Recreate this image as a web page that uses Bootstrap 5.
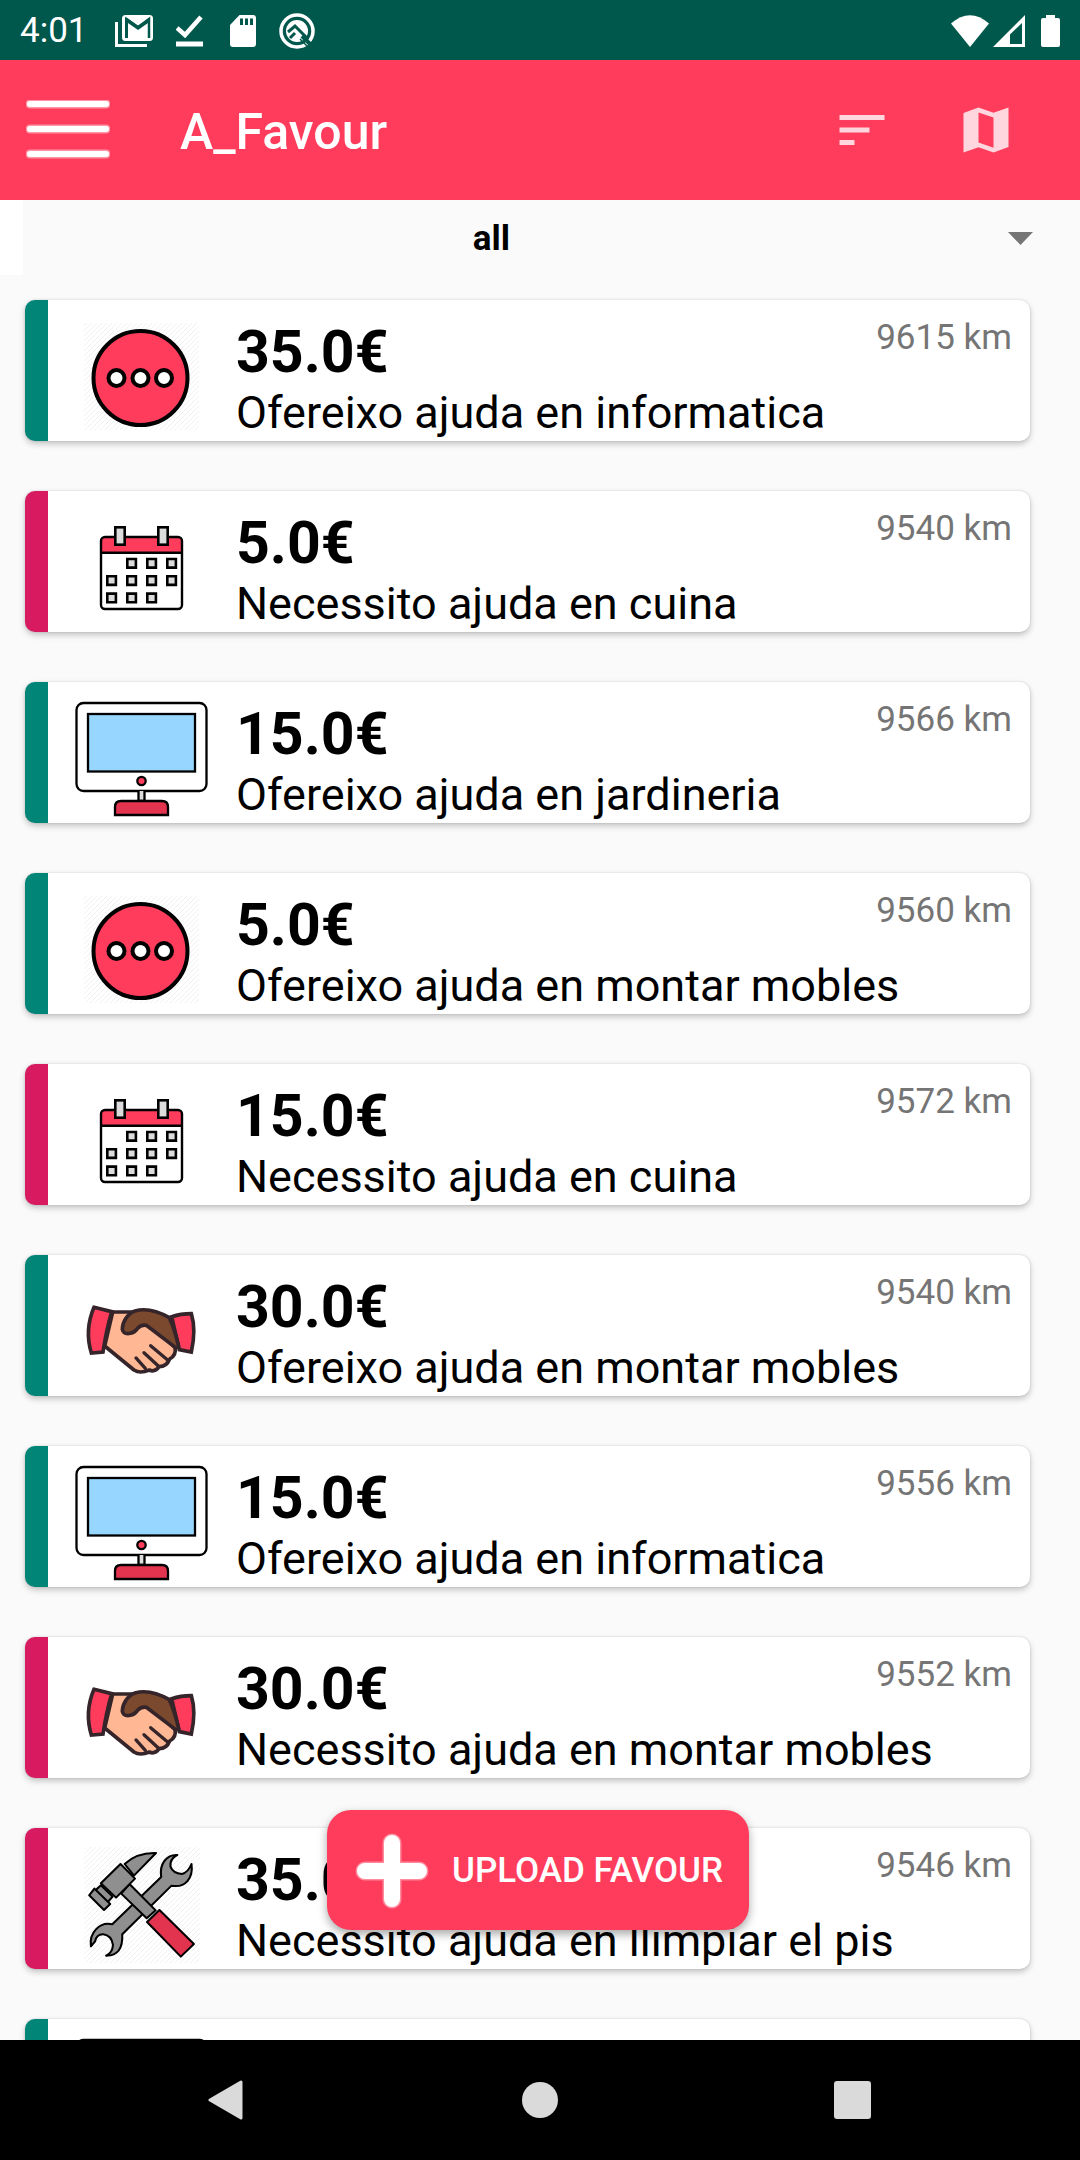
<!DOCTYPE html>
<html lang="ca">
<head>
<meta charset="utf-8">
<meta name="viewport" content="width=device-width, initial-scale=1">
<title>A_Favour</title>
<link href="https://cdn.jsdelivr.net/npm/bootstrap@5.3.0/dist/css/bootstrap.min.css" rel="stylesheet">
<style>
  :root { --brand: #ff3c5c; --offer: #008577; --need: #d81b60; }
  body { font-family: Roboto, "Noto Sans", sans-serif; background: #fafafa; color: #000; }
  svg { display: block; flex: none; }
  .status-strip { height: 60px; background: #00574b; color: #fff; font-size: 35px; line-height: 44px; padding: 2px 20px 0; }
  .status-icons { gap: 23px; padding-left: 27px; }
  .app-bar { height: 140px; background: var(--brand); color: #fff; padding: 0 64px 0 26px; }
  .app-title { font-size: 50px; line-height: 60px; font-weight: 500; margin: 4px 0 0 70px; }
  .app-actions { gap: 64px; color: #ffd6dd; }
  .plain-btn { background: none; border: 0; padding: 0; color: inherit; }
  .filter-bar { height: 75px; padding-right: 24px; }
  .filter-edge { width: 23px; background: #fff; }
  .filter-select { appearance: none; border: 0; border-radius: 0; background: none; width: 100%;
    font-size: 35px; font-weight: 700; line-height: 44px; color: #000; text-align: center; text-align-last: center; padding: 2px 96px 0 0; }
  .filter-arrow { right: 23px; top: 32px; pointer-events: none; }
  .favour-list { gap: 50px; padding: 25px 50px 0 25px; }
  .favour { height: 141px; background: #fff; border-radius: 10px; border-left: 23px solid var(--offer);
    box-shadow: 0 3px 6px rgba(0,0,0,.22), 0 0 2px rgba(0,0,0,.16); color: #000; text-decoration: none; }
  .favour-need { border-left-color: var(--need); }
  .favour-text { padding: 16px 18px 0 2px; }
  .price { font-size: 59px; line-height: 72px; font-weight: 700; }
  .descr { font-size: 45px; line-height: 49px; }
  .dist { font-size: 35px; line-height: 44px; color: #757575; }
  .fab { left: 327px; right: 331px; bottom: 110px; height: 120px; border: 0; border-radius: 24px; background: var(--brand); color: #fff;
    font-size: 35px; line-height: 44px; font-weight: 500; gap: 23px; padding: 2px 0 0 28px; box-shadow: 0 4px 10px rgba(0,0,0,.35); }
  .nav-strip { height: 120px; background: #000; color: #dadada; gap: 274px; }
</style>
</head>
<body class="vh-100 d-flex flex-column overflow-hidden">

<svg width="0" height="0" class="position-absolute" aria-hidden="true">
  <defs>
    <pattern id="hatch" width="5" height="5" patternUnits="userSpaceOnUse"><path d="M-1 1l2-2M0 5l5-5M4 6l2-2" stroke="#f1f1f1" stroke-width="1"/></pattern>
    <symbol id="i-more" viewBox="48 0 186 141">
      <rect x="84" y="23" width="115" height="107" fill="url(#hatch)"/>
      <circle cx="140.500" cy="78" r="47" fill="#ff3c5c" stroke="#000" stroke-width="4"/>
      <g fill="#fff" stroke="#000" stroke-width="4"><circle cx="116.500" cy="78" r="8"/><circle cx="140.500" cy="78" r="8"/><circle cx="164" cy="78" r="8"/></g>
    </symbol>
    <symbol id="i-calendar" viewBox="48 0 186 141">
      <rect x="101" y="46" width="81" height="72" rx="4" fill="#fff"/>
      <path d="M101 62V50q0-4 4-4h73q4 0 4 4v12z" fill="#ff3c5c"/>
      <rect x="101" y="46" width="81" height="72" rx="4" fill="none" stroke="#000" stroke-width="2.400"/>
      <path d="M101 61.800h81" stroke="#000" stroke-width="2.600"/>
      <g fill="#dcdcdc" stroke="#000" stroke-width="2.600">
        <rect x="115.300" y="36.300" width="9.400" height="17.400"/><rect x="158.300" y="36.300" width="9.400" height="17.400"/>
        <path d="M127.300 68h8.600v8.600h-8.600zM147.300 68h8.600v8.600h-8.600zM167.300 68h8.600v8.600h-8.600zM107.300 85.300h8.600v8.600h-8.600zM127.300 85.300h8.600v8.600h-8.600zM147.300 85.300h8.600v8.600h-8.600zM167.300 85.300h8.600v8.600h-8.600zM107.300 102.600h8.600v8.600h-8.600zM127.300 102.600h8.600v8.600h-8.600zM147.300 102.600h8.600v8.600h-8.600z"/>
      </g>
    </symbol>
    <symbol id="i-computer" viewBox="48 0 186 141">
      <g stroke="#000" stroke-width="2.300">
        <rect x="76.500" y="21" width="130" height="88" rx="7" fill="#fff"/>
        <rect x="88" y="32" width="107" height="57.500" fill="#97d7ff"/>
        <circle cx="141.500" cy="99" r="4.200" fill="#ff3c5c"/>
        <path d="M138.500 109v10h6v-10" fill="#ddd"/>
        <path d="M115 133v-8q0-6 6-6h41q6 0 6 6v8z" fill="#e2334f"/>
      </g>
    </symbol>
    <symbol id="i-hands" viewBox="48 0 186 141">
      <g transform="translate(60 -5) scale(.3333)" stroke="#35252a" stroke-width="11" stroke-linejoin="round" stroke-linecap="round">
        <path d="M158 186H222L262 216 345 292Q350 315 329 327 320 350 298 350 284 368 268 360 240 372 222 360L134 288z" fill="#ffb893"/>
        <path d="M102 172L155 185Q139 240 129 306L94 309Q73 240 102 172z" fill="#ff3c5c" stroke-linejoin="miter"/>
        <path d="M335 200Q362 191 394 191 409 240 394 306L358 299z" fill="#ff3c5c" stroke-linejoin="miter"/>
        <path d="M328 203Q270 170 225 183C203 190 187 216 187 238 192 258 221 252 232 236Q243 223 259 226L347 293 356 290Q345 240 328 203z" fill="#7b4a2e"/>
        <path d="M228 324l28 31M252 308l43 40M272 287l50 42" fill="none" stroke-width="10"/>
      </g>
    </symbol>
    <symbol id="i-tools" viewBox="48 0 186 141">
      <rect x="84" y="19" width="116" height="116" fill="url(#hatch)"/>
      <g transform="translate(0 -48) scale(.3444 .3333)" fill="#8f8f8f" stroke="#000" stroke-width="6" stroke-linejoin="round">
        <path d="M515 225C485 223 462 250 468 291L326 433C290 424 258 458 264 499L276 484Q281 462 300 463 324 466 328 495 327 518 308 527 358 528 355 463L498 317C538 325 562 294 556 252Q546 278 528 282 502 280 495 260 492 238 515 225z"/>
        <path d="M376 312L452 391 426 415 352 341z"/>
        <path d="M362 252Q398 217 453 219L389 287z"/>
        <path d="M350 252L392 296 337 353 293 310z"/>
        <path d="M293 316l34 34-14 16-36-35z"/>
        <path d="M274 326L320 372 302 390 259 346z"/>
        <path d="M463 390L563 492 525 530 427 426z" fill="#e2334f"/>
      </g>
    </symbol>
  </defs>
</svg>

<div class="status-strip d-flex align-items-center flex-shrink-0">
  <span>4:01</span>
  <div class="status-icons d-flex align-items-center" aria-hidden="true">
    <svg width="38" height="32" viewBox="0 0 38 32"><path d="M1.500 7v23.500H32" fill="none" stroke="#fff" stroke-width="3"/><rect x="8.500" y="1.500" width="28" height="23" rx="2" fill="none" stroke="#fff" stroke-width="3"/><path d="M9 1h28L23 10.500z" fill="#fff"/><path d="M13 23V8l10 7 10-7v15z" fill="#fff"/><path d="M11.500 23V4L23 12.500 34 4v19" fill="none" stroke="#00574b" stroke-width="2.500"/></svg>
    <svg width="27" height="32" viewBox="0 0 27 32"><path d="M1 13l8 7L25 2" fill="none" stroke="#fff" stroke-width="4.500"/><path d="M0 26.500h27v5H0z" fill="#fff"/></svg>
    <svg class="ms-1" width="26" height="32" viewBox="0 0 26 32"><path d="M9.500 0H23q3 0 3 3v26q0 3-3 3H3q-3 0-3-3V10z" fill="#fff"/><path d="M10 3.500h3v6.500h-3zM15 3.500h3v6.500h-3zM20 3.500h3v6.500h-3z" fill="#00574b"/></svg>
    <svg width="36" height="36" viewBox="0 0 36 36"><circle cx="18" cy="18" r="16" fill="none" stroke="#fff" stroke-width="3.500"/><circle cx="18" cy="18" r="11" fill="#fff"/><path d="M9 19l7-6 12 12M11 25l5-5" fill="none" stroke="#00574b" stroke-width="3"/><path d="M23 23l11 11" stroke="#00574b" stroke-width="4"/><path d="M21 26l7 7" stroke="#00574b" stroke-width="1.500"/></svg>
  </div>
  <div class="ms-auto d-flex align-items-center" aria-hidden="true">
    <svg width="38" height="32" viewBox="0 0 38 32"><path d="M0 8.500Q19-8 38 8.500L19 32z" fill="#fff"/></svg>
    <svg class="ms-1" width="32" height="32" viewBox="0 0 32 32"><path fill-rule="evenodd" d="M32 0v32H0zM29 8L17 19.500V29h12z" fill="#fff"/></svg>
    <svg class="ms-3" width="19" height="32" viewBox="0 0 19 32"><path d="M5 0h9v3h3q2 0 2 2v25q0 2-2 2H2q-2 0-2-2V5q0-2 2-2h3z" fill="#fff"/></svg>
  </div>
</div>

<header class="app-bar d-flex align-items-center flex-shrink-0">
  <button class="plain-btn" type="button" aria-label="Menu"><svg width="84" height="60" viewBox="0 0 84 60"><g stroke-linecap="round" stroke="#fff"><path d="M4 4h76M4 29h76M4 54h76" stroke-width="9" opacity=".45"/><path d="M4 4h76M4 29h76M4 54h76" stroke-width="6"/></g></svg></button>
  <h1 class="app-title">A_Favour</h1>
  <div class="app-actions d-flex ms-auto">
    <button class="plain-btn" type="button" aria-label="Sort"><svg width="60" height="60" viewBox="0 0 24 24" fill="currentColor"><path d="M3 18h6v-2H3v2zM3 6v2h18V6H3zm0 7h12v-2H3v2z"/></svg></button>
    <button class="plain-btn" type="button" aria-label="Map"><svg width="60" height="60" viewBox="0 0 24 24" fill="currentColor"><path fill-rule="evenodd" d="M3 5.200L9 3l6 2.100L21 3v15.800L15 21l-6-2.100L3 21zM9 5v12l6 2.100V7z"/></svg></button>
  </div>
</header>

<main class="flex-grow-1 overflow-hidden position-relative">
  <div class="filter-bar d-flex position-relative">
    <div class="filter-edge flex-shrink-0"></div>
    <select class="filter-select" aria-label="Category"><option>all</option></select>
    <svg class="filter-arrow position-absolute me-4" width="25" height="13" viewBox="0 0 25 13" aria-hidden="true"><path d="M0 0h25L12.500 13z" fill="#757575"/></svg>
  </div>

  <div class="favour-list d-flex flex-column">
    <a href="#" class="favour d-flex"><svg width="186" height="141"><use href="#i-more"/></svg><div class="favour-text flex-grow-1"><div class="d-flex justify-content-between"><span class="price">35.0€</span><span class="dist">9615 km</span></div><div class="descr">Ofereixo ajuda en informatica</div></div></a>
    <a href="#" class="favour favour-need d-flex"><svg width="186" height="141"><use href="#i-calendar"/></svg><div class="favour-text flex-grow-1"><div class="d-flex justify-content-between"><span class="price">5.0€</span><span class="dist">9540 km</span></div><div class="descr">Necessito ajuda en cuina</div></div></a>
    <a href="#" class="favour d-flex"><svg width="186" height="141"><use href="#i-computer"/></svg><div class="favour-text flex-grow-1"><div class="d-flex justify-content-between"><span class="price">15.0€</span><span class="dist">9566 km</span></div><div class="descr">Ofereixo ajuda en jardineria</div></div></a>
    <a href="#" class="favour d-flex"><svg width="186" height="141"><use href="#i-more"/></svg><div class="favour-text flex-grow-1"><div class="d-flex justify-content-between"><span class="price">5.0€</span><span class="dist">9560 km</span></div><div class="descr">Ofereixo ajuda en montar mobles</div></div></a>
    <a href="#" class="favour favour-need d-flex"><svg width="186" height="141"><use href="#i-calendar"/></svg><div class="favour-text flex-grow-1"><div class="d-flex justify-content-between"><span class="price">15.0€</span><span class="dist">9572 km</span></div><div class="descr">Necessito ajuda en cuina</div></div></a>
    <a href="#" class="favour d-flex"><svg width="186" height="141"><use href="#i-hands"/></svg><div class="favour-text flex-grow-1"><div class="d-flex justify-content-between"><span class="price">30.0€</span><span class="dist">9540 km</span></div><div class="descr">Ofereixo ajuda en montar mobles</div></div></a>
    <a href="#" class="favour d-flex"><svg width="186" height="141"><use href="#i-computer"/></svg><div class="favour-text flex-grow-1"><div class="d-flex justify-content-between"><span class="price">15.0€</span><span class="dist">9556 km</span></div><div class="descr">Ofereixo ajuda en informatica</div></div></a>
    <a href="#" class="favour favour-need d-flex"><svg width="186" height="141"><use href="#i-hands"/></svg><div class="favour-text flex-grow-1"><div class="d-flex justify-content-between"><span class="price">30.0€</span><span class="dist">9552 km</span></div><div class="descr">Necessito ajuda en montar mobles</div></div></a>
    <a href="#" class="favour favour-need d-flex"><svg width="186" height="141"><use href="#i-tools"/></svg><div class="favour-text flex-grow-1"><div class="d-flex justify-content-between"><span class="price">35.0€</span><span class="dist">9546 km</span></div><div class="descr">Necessito ajuda en llimpiar el pis</div></div></a>
    <a href="#" class="favour d-flex" aria-label="Favour"><svg width="186" height="141"><use href="#i-computer"/></svg></a>
  </div>

  <button class="fab position-absolute d-flex align-items-center text-nowrap" type="button">
    <svg width="74" height="76" viewBox="0 0 74 76" aria-hidden="true"><g stroke="#fff" stroke-linecap="round"><path d="M37 10v56M10 38h54" stroke-width="19" opacity=".4"/><path d="M37 10v56M10 38h54" stroke-width="16"/></g></svg>
    <span>UPLOAD FAVOUR</span>
  </button>
</main>

<nav class="nav-strip d-flex align-items-center justify-content-center flex-shrink-0" aria-label="System">
  <button class="plain-btn" type="button" aria-label="Back"><svg width="40" height="40" viewBox="0 0 40 40"><path d="M4 20L35 2v36z" fill="currentColor" stroke="currentColor" stroke-width="3" stroke-linejoin="round"/></svg></button>
  <button class="plain-btn" type="button" aria-label="Home"><svg width="40" height="40" viewBox="0 0 40 40"><circle cx="20" cy="20" r="18" fill="currentColor"/></svg></button>
  <button class="plain-btn" type="button" aria-label="Recents"><svg width="40" height="40" viewBox="0 0 40 40"><rect x="0" y="1" width="37" height="38" rx="3" fill="currentColor"/></svg></button>
</nav>
<script src="https://cdn.jsdelivr.net/npm/bootstrap@5.3.0/dist/js/bootstrap.bundle.min.js"></script>
</body>
</html>
